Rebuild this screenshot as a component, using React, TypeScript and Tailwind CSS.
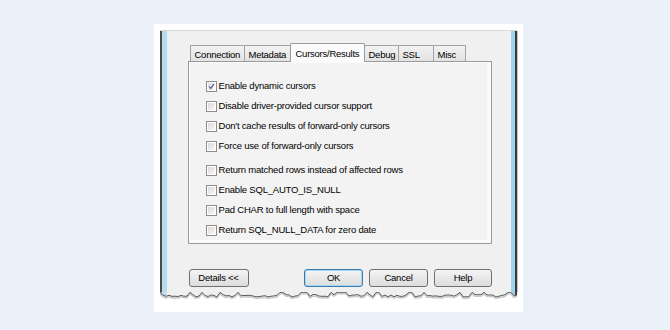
import React from 'react'

const font = { fontFamily: '"Liberation Sans", Arial, sans-serif' }

const tabs = [
  { label: 'Connection', w: 'w-[55px]' },
  { label: 'Metadata', w: 'w-[47px]' },
  { label: 'Cursors/Results', w: 'w-[75px]', active: true },
  { label: 'Debug', w: 'w-[35px]' },
  { label: 'SSL', w: 'w-[36px]' },
  { label: 'Misc', w: 'w-[33px]' },
]

const options = [
  [
    { label: 'Enable dynamic cursors', checked: true },
    { label: 'Disable driver-provided cursor support' },
    { label: "Don't cache results of forward-only cursors" },
    { label: 'Force use of forward-only cursors' },
  ],
  [
    { label: 'Return matched rows instead of affected rows' },
    { label: 'Enable SQL_AUTO_IS_NULL' },
    { label: 'Pad CHAR to full length with space' },
    { label: 'Return SQL_NULL_DATA for zero date' },
  ],
]

function Checkbox({ checked }: { checked?: boolean }) {
  return (
    <div className="w-[11px] h-[11px] border border-[#8f8f8f] bg-white p-[1px] shrink-0">
      <div className="w-full h-full bg-gradient-to-br from-[#dadada] to-[#f8f8f8] flex items-center justify-center">
        {checked && (
          <svg width="9" height="9" viewBox="0 0 9 9">
            <path d="M1.5 4.5 L3.5 7 L7.5 1.5" fill="none" stroke="#4d6185" strokeWidth="1.5" />
          </svg>
        )}
      </div>
    </div>
  )
}

function Button({ children, primary, w }: { children: React.ReactNode; primary?: boolean; w: string }) {
  return (
    <button
      className={`${w} h-[18px] rounded-[3px] border text-[9.5px] tracking-[-0.25px] text-black flex items-center justify-center bg-gradient-to-b from-[#f4f4f4] to-[#dddddd] ${
        primary ? 'border-[#3d7bad] shadow-[inset_0_0_0_1px_#9fd8f2]' : 'border-[#707070]'
      }`}
      style={font}
    >
      {children}
    </button>
  )
}

// jagged torn edge at the bottom of the dialog
function TornEdge() {
  let seed = 7
  const rnd = () => {
    seed = (seed * 16807) % 2147483647
    return seed / 2147483647
  }
  const pts: [number, number][] = []
  for (let x = 0; x <= 357; x += 3) {
    let y = 2.5 + rnd() * 2.5
    if (rnd() > 0.78) y = 0.3
    pts.push([x, y])
  }
  const line = pts.map(([x, y]) => `${x},${y}`).join(' ')
  const poly = `0,-1 357,-1 ${pts
    .slice()
    .reverse()
    .map(([x, y]) => `${x},${y}`)
    .join(' ')}`
  const shadow = pts.map(([x, y]) => `${x},${y + 1.5}`).join(' ')
  return (
    <svg width="357" height="10" viewBox="0 0 357 10" className="block">
      <defs>
        <clipPath id="torn">
          <polygon points={poly} />
        </clipPath>
      </defs>
      <polyline points={shadow} fill="none" stroke="#c9c9c9" strokeWidth="1.6" />
      <g clipPath="url(#torn)">
        <rect x="0" y="-1" width="357" height="11" fill="#f0f0f0" />
        <rect x="0" y="-1" width="1.5" height="11" fill="#4a4a4a" />
        <rect x="1.5" y="-1" width="5" height="11" fill="#b7dbef" />
        <rect x="351" y="-1" width="4" height="11" fill="#9fd2ec" />
        <rect x="355" y="-1" width="2" height="11" fill="#3a3a3a" />
      </g>
      <polyline points={line} fill="none" stroke="#5a5a5a" strokeWidth="1" />
    </svg>
  )
}

export default function App() {
  return (
    <div className="w-[670px] h-[330px] bg-[#ebf1f9] pl-[154px] pt-[24px]" style={font}>
      <div className="w-[369px] h-[288px] bg-white pl-[6px] pt-[6px]">
        <div className="w-[357px] flex flex-col">
          <div className="flex h-[262px] border-t border-[#d8d8d8]">
            <div className="w-[1.5px] bg-[#4a4a4a]" />
            <div className="w-[5px] bg-[#b7dbef]" />
            <div className="flex-1 bg-[#f0f0f0] pl-[21px] pr-[19px] pt-[12px]">
              {/* tabs */}
              <div className="flex items-end h-[18px] pl-[2px]">
                {tabs.map((t) =>
                  t.active ? (
                    <div
                      key={t.label}
                      className={`${t.w} h-[19px] -mb-px -ml-px relative z-10 bg-[#fbfbfb] border border-b-0 border-[#9a9a9a] rounded-t-[2px] text-[9.5px] tracking-[-0.25px] text-black pl-[5px] pt-[3px]`}
                    >
                      {t.label}
                    </div>
                  ) : (
                    <div
                      key={t.label}
                      className={`${t.w} h-[16px] -ml-px first:ml-0 bg-gradient-to-b from-[#f2f2f2] to-[#e3e3e3] border border-b-0 border-[#a3a3a3] text-[9.5px] tracking-[-0.25px] text-black pl-[4px] pt-[2px]`}
                    >
                      {t.label}
                    </div>
                  ),
                )}
              </div>
              {/* panel */}
              <div className="h-[183px] border border-[#9a9a9a] bg-[#fbfbfb] pt-[1px] pl-[1px] pr-[4px] pb-[3px]">
                <div className="h-full bg-[#f3f3f3] pt-[13px] pl-[16px] flex flex-col gap-[4px]">
                  {options.map((group, gi) => (
                    <div key={gi} className="flex flex-col">
                      {group.map((o) => (
                        <div key={o.label} className="h-[20px] flex items-center gap-[2px]">
                          <Checkbox checked={o.checked} />
                          <span className="text-[9.5px] tracking-[-0.2px] text-black leading-none">{o.label}</span>
                        </div>
                      ))}
                    </div>
                  ))}
                </div>
              </div>
              {/* buttons */}
              <div className="flex justify-between mt-[25px] pl-[1px]">
                <Button w="w-[60px]">Details &lt;&lt;</Button>
                <div className="flex gap-[6px]">
                  <Button w="w-[59px]" primary>
                    OK
                  </Button>
                  <Button w="w-[59px]">Cancel</Button>
                  <Button w="w-[58px]">Help</Button>
                </div>
              </div>
            </div>
            <div className="w-[4px] bg-[#9fd2ec]" />
            <div className="w-[2px] bg-[#3a3a3a] shadow-[1px_0_1px_#bdbdbd]" />
          </div>
          <TornEdge />
        </div>
      </div>
    </div>
  )
}
